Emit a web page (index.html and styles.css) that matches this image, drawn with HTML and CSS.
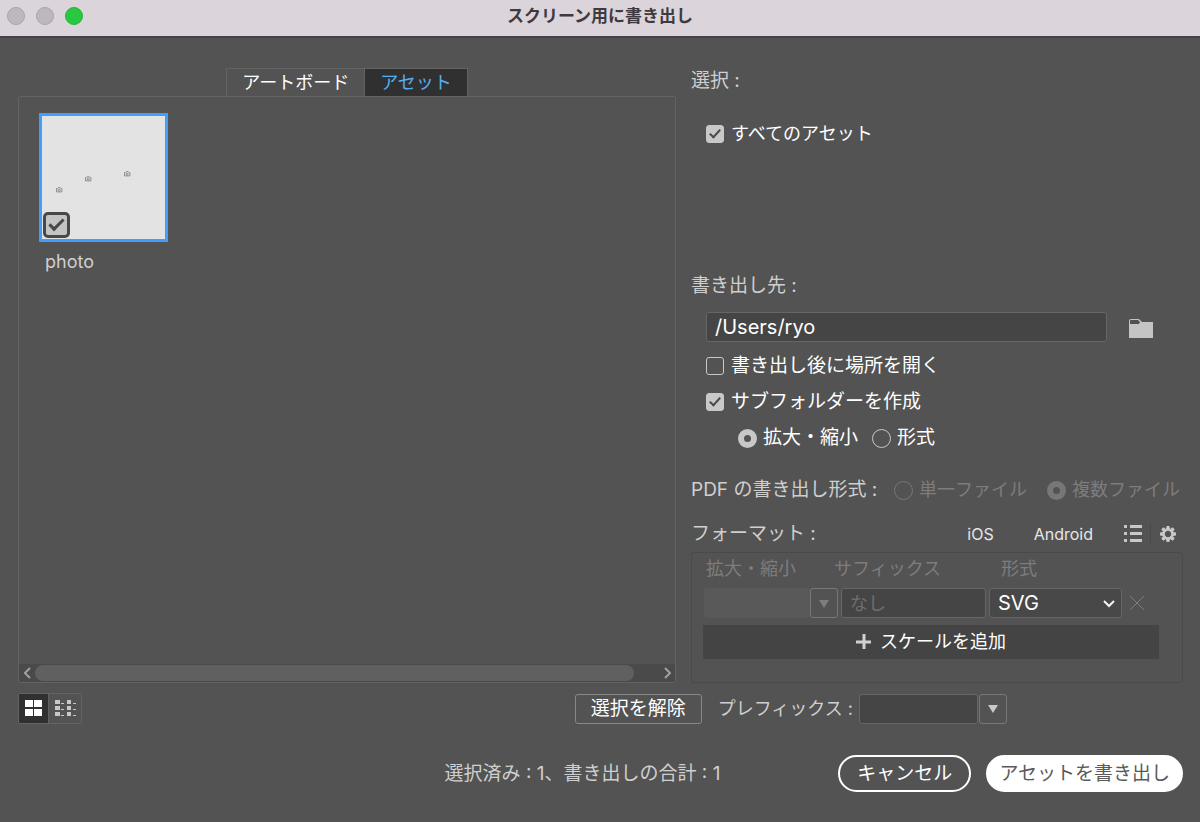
FILE: index.html
```html
<!DOCTYPE html>
<html lang="ja">
<head>
<meta charset="utf-8">
<meta name="viewport" content="width=device-width, initial-scale=1">
<title>スクリーン用に書き出し</title>
<link rel="stylesheet" href="styles.css">
</head>
<body>
<div class="window">
  <header class="titlebar">
    <div class="lights">
      <button class="light" type="button" aria-label="閉じる"></button>
      <button class="light" type="button" aria-label="しまう"></button>
      <button class="light light-zoom" type="button" aria-label="拡大"></button>
    </div>
    <h1 class="title">スクリーン用に書き出し</h1>
  </header>

  <main class="content">
    <section class="assets">
      <div class="tabs" role="tablist">
        <button class="tab" type="button" role="tab" aria-selected="false">アートボード</button>
        <button class="tab tab-active" type="button" role="tab" aria-selected="true">アセット</button>
      </div>
      <div class="panel">
        <div class="asset-list">
          <div class="asset">
            <div class="thumb">
              <svg class="thumb-art" viewBox="0 0 123 123" aria-hidden="true">
                <g fill="none" stroke="#8e8e8e" stroke-width="1">
                  <g id="cam"><path d="M14.5 72.5h1l.6-.8h2.2l.6.8h1v3.4h-5.4z"/><circle cx="17.2" cy="74.2" r="1"/></g>
                  <use href="#cam" x="29" y="-11"/>
                  <use href="#cam" x="68" y="-16"/>
                </g>
              </svg>
              <input class="thumb-check" id="asset-photo" type="checkbox" checked>
            </div>
            <label class="asset-name" for="asset-photo">photo</label>
          </div>
        </div>
        <div class="scrollbar">
          <button class="scroll-arrow" type="button" aria-label="左へ"><svg width="7" height="12" viewBox="0 0 7 12"><path d="M6 1 1 6l5 5"/></svg></button>
          <div class="track"><div class="scroll-thumb"></div></div>
          <button class="scroll-arrow" type="button" aria-label="右へ"><svg width="7" height="12" viewBox="0 0 7 12"><path d="m1 1 5 5-5 5"/></svg></button>
        </div>
      </div>
    </section>

    <section class="settings">
      <div class="group group-select">
        <h2 class="heading">選択 :</h2>
        <label class="option option-all"><input class="check" type="checkbox" checked>すべてのアセット</label>
      </div>

      <div class="group group-dest">
        <label class="heading" for="path">書き出し先 :</label>
        <div class="path-row">
          <input class="field path" id="path" type="text" value="/Users/ryo">
          <button class="icon-button folder" type="button" aria-label="フォルダーを選択">
            <svg width="24" height="20" viewBox="0 0 24 20"><path d="M0 19V2Q0 0 2 0h7q1 0 2 1l2 2h11v16z" fill="#c4c4c4"/><path d="M1 2q0-1 1-1h7l2 2-1 2H1z" fill="#505050"/></svg>
          </button>
        </div>
        <label class="option"><input class="check" type="checkbox">書き出し後に場所を開く</label>
        <label class="option"><input class="check" type="checkbox" checked>サブフォルダーを作成</label>
        <div class="radio-row">
          <label class="option"><input class="radio" type="radio" name="sub" checked>拡大・縮小</label>
          <label class="option"><input class="radio" type="radio" name="sub">形式</label>
        </div>
      </div>

      <div class="pdf-row">
        <span class="heading">PDF の書き出し形式 :</span>
        <div class="pdf-options">
          <label class="option option-off"><input class="radio" type="radio" name="pdf" disabled>単一ファイル</label>
          <label class="option option-off"><input class="radio" type="radio" name="pdf" checked disabled>複数ファイル</label>
        </div>
      </div>

      <div class="format-head">
        <h2 class="heading">フォーマット :</h2>
        <div class="presets">
          <button class="preset" type="button">iOS</button>
          <button class="preset" type="button">Android</button>
        </div>
        <button class="icon-button" type="button" aria-label="一覧">
          <svg width="18" height="18" viewBox="0 0 18 18" fill="#c8c8c8"><path d="M0 0h3v3H0zM0 7h3v3H0zM0 14h3v3H0zM6 0h12v3H6zM6 7h12v3H6zM6 14h12v3H6z"/></svg>
        </button>
        <button class="icon-button gear" type="button" aria-label="詳細設定">
          <svg width="16" height="16" viewBox="-8 -8 16 16"><g fill="#c8c8c8"><path id="tooth" d="M-2-5-1.4-8H1.4L2-5z"/><use href="#tooth" transform="rotate(45)"/><use href="#tooth" transform="rotate(90)"/><use href="#tooth" transform="rotate(135)"/><use href="#tooth" transform="rotate(180)"/><use href="#tooth" transform="rotate(225)"/><use href="#tooth" transform="rotate(270)"/><use href="#tooth" transform="rotate(315)"/></g><circle r="4.4" fill="none" stroke="#c8c8c8" stroke-width="2.4"/></svg>
        </button>
      </div>

      <div class="format-box">
        <div class="format-labels">
          <label for="scale">拡大・縮小</label>
          <label for="suffix">サフィックス</label>
          <label for="type">形式</label>
        </div>
        <div class="format-row">
          <div class="combo combo-off">
            <input class="field" id="scale" type="text" disabled>
            <button class="drop" type="button" disabled aria-label="拡大・縮小を選択"><svg width="12" height="9" viewBox="0 0 12 9"><path d="M1 1h10L6 9z"/></svg></button>
          </div>
          <input class="field suffix" id="suffix" type="text" placeholder="なし" disabled>
          <div class="select-wrap">
            <select class="select" id="type"><option>SVG</option><option>PNG</option><option>JPG</option><option>PDF</option></select>
            <svg class="chevron" width="12" height="8" viewBox="0 0 12 8"><path d="m1 1 5 5 5-5"/></svg>
          </div>
          <button class="remove" type="button" disabled aria-label="削除"><svg width="14" height="14" viewBox="0 0 14 14"><path d="m0 0 14 14M14 0 0 14"/></svg></button>
        </div>
        <button class="add" type="button"><svg width="16" height="16" viewBox="0 0 16 16"><path d="M8 0v15M0 8h15"/></svg>スケールを追加</button>
      </div>
    </section>
  </main>

  <div class="toolbar">
    <div class="views">
      <button class="view view-active" type="button" aria-label="サムネール表示"><svg width="17" height="17" viewBox="0 0 17 17" fill="#fff"><path d="M0 0h8v7H0zM9 0h8v7H9zM0 9h8v7H0zM9 9h8v7H9z"/></svg></button>
      <button class="view" type="button" aria-label="リスト表示"><svg width="21" height="17" viewBox="0 0 21 17" fill="#c8c8c8"><path d="M0 0h5v4H0zM0 6h5v4H0zM0 12h5v4H0zM12 0h4v4h-4zM12 6h4v4h-4zM12 12h4v4h-4zM6 3h3v1H6zM6 9h3v1H6zM6 15h3v1H6zM18 3h3v1h-3zM18 9h3v1h-3zM18 15h3v1h-3z"/></svg></button>
    </div>
    <button class="clear" type="button">選択を解除</button>
    <div class="prefix">
      <label for="prefix">プレフィックス :</label>
      <div class="combo">
        <input class="field" id="prefix" type="text">
        <button class="drop" type="button" aria-label="プレフィックスを選択"><svg width="12" height="9" viewBox="0 0 12 9"><path d="M1 1h10L6 9z"/></svg></button>
      </div>
    </div>
  </div>

  <footer class="footer">
    <p class="summary">選択済み : 1、書き出しの合計 : 1</p>
    <div class="actions">
      <button class="pill" type="button">キャンセル</button>
      <button class="pill pill-primary" type="button">アセットを書き出し</button>
    </div>
  </footer>
</div>
</body>
</html>
```

FILE: styles.css
```css
*, *::before, *::after { box-sizing: border-box; }

body {
  margin: 0;
  background: #535353;
  color: #cfcfcf;
  font-family: Inter, "Noto Sans CJK JP", sans-serif;
  font-size: 19px;
  line-height: 26px;
}

button, input, select { margin: 0; font: inherit; color: inherit; }
button { padding: 0; border: 0; background: none; white-space: nowrap; }
svg { display: block; }
h1, h2, p { margin: 0; font-size: inherit; font-weight: 400; }

.window {
  display: flex;
  flex-direction: column;
  min-height: 100vh;
}

/* Title bar */
.titlebar {
  display: grid;
  grid-template-columns: 1fr auto 1fr;
  align-items: center;
  height: 38px;
  padding: 0 7px 5px;
  background: #dcd4db;
  border-bottom: 2px solid #444146;
}
.lights { display: flex; gap: 11px; }
.light {
  width: 18px;
  height: 18px;
  border: 1px solid #a9a3aa;
  border-radius: 50%;
  background: #bdb7be;
}
.light-zoom { border-color: #22b436; background: #28c840; }
.title { color: #3e3a3f; font-size: 17px; font-weight: 700; }

/* Two columns */
.content {
  display: grid;
  grid-template-columns: 658fr 492fr;
  gap: 15px;
  flex: 1;
  padding: 30px 17px 0 18px;
}
.assets, .settings { display: flex; flex-direction: column; min-width: 0; }

.tabs { display: flex; justify-content: center; }
.tab {
  height: 28px;
  padding: 0 15px;
  border: 1px solid #636363;
  border-bottom: 0;
  color: #fff;
  font-size: 18px;
  line-height: 28px;
}
.tab-active { border-left: 0; background: #303030; color: #55aef5; }

.panel {
  display: flex;
  flex: 1;
  flex-direction: column;
  border: 1px solid #636363;
  border-radius: 2px;
}
.asset-list { flex: 1; padding: 16px 20px; }
.asset { width: 129px; }
.thumb { position: relative; border: 3px solid #419efa; background: #e3e3e3; }
.thumb-art { width: 100%; }
.thumb-check {
  position: absolute;
  bottom: 1px;
  left: 1px;
  display: grid;
  place-items: center;
  width: 27px;
  height: 26px;
  border: 3px solid #484848;
  border-radius: 5px;
  background: #c4c4c4;
  appearance: none;
}
.thumb-check:checked::after {
  width: 15px;
  height: 8px;
  margin-bottom: 4px;
  border: solid #484848;
  border-width: 0 0 3px 3px;
  transform: rotate(-45deg);
  content: "";
}
.asset-name { display: block; padding: 7px 6px; font-size: 18px; }

.scrollbar { display: flex; height: 18px; background: #4a4a4a; }
.scroll-arrow { display: grid; place-items: center; width: 16px; }
.scroll-arrow svg { fill: none; stroke: #a0a0a0; stroke-width: 2; }
.track { flex: 1; padding-top: 1px; }
.scroll-thumb { width: 96%; height: 16px; border-radius: 8px; background: #606060; }

/* Settings */
.heading { display: block; white-space: nowrap; }
.group-select { flex: 1; }
.option {
  display: flex;
  align-items: center;
  gap: 7px;
  color: #fff;
  white-space: nowrap;
}
.option-all { margin: 27px 0 0 15px; font-size: 18px; }
.option-off { color: #7d7d7d; font-size: 18px; }

.check {
  display: grid;
  flex: none;
  place-items: center;
  width: 18px;
  height: 18px;
  border: 1px solid #c8c8c8;
  border-radius: 3px;
  appearance: none;
}
.check:checked { background: #c8c8c8; }
.check:checked::after {
  width: 6px;
  height: 11px;
  margin-bottom: 3px;
  border: solid #4a4a4a;
  border-width: 0 2px 2px 0;
  transform: rotate(42deg);
  content: "";
}
.radio {
  flex: none;
  width: 19px;
  height: 19px;
  border: 1px solid #c8c8c8;
  border-radius: 50%;
  appearance: none;
}
.radio:checked { border: 6px solid #c8c8c8; }
.radio:disabled { border-color: #777; }

.field {
  min-width: 0;
  height: 30px;
  padding: 0 8px;
  border: 1px solid #666;
  border-radius: 3px;
  background: #454545;
  color: #fff;
}
.group-dest { display: grid; gap: 10px; }
.group-dest > .option { margin-left: 15px; }
.path-row {
  display: flex;
  gap: 22px;
  margin: 3px 30px 1px 15px;
}
.path { flex: 1; font-size: 20px; }
.icon-button { display: grid; place-items: center; }
.folder { padding-top: 4px; }
.radio-row { display: flex; gap: 14px; margin-left: 47px; }
.radio-row .option { gap: 6px; }

.pdf-row {
  display: flex;
  align-items: center;
  justify-content: space-between;
  margin-top: 26px;
}
.pdf-options { display: flex; gap: 20px; padding-right: 3px; }
.pdf-options .option { gap: 6px; }

.format-head { display: flex; align-items: center; margin-top: 18px; padding-right: 7px; }
.presets { display: flex; flex: 1; justify-content: flex-end; gap: 40px; margin-right: 31px; }
.preset { color: #e6e6e6; font-size: 16px; }
.gear { margin-left: 8px; padding-left: 9px; border-left: 1px solid #494949; height: 22px; }

.format-box {
  margin-top: 5px;
  padding: 3px 23px 23px 11px;
  border: 1px solid #4a4a4a;
  border-radius: 3px;
}
.format-labels {
  display: grid;
  grid-template-columns: 128px 167px 1fr;
  padding-left: 3px;
  color: #7d7d7d;
  font-size: 18px;
}
.format-row { display: flex; gap: 3px; margin: 6px 0 7px; padding-left: 1px; }
.combo { display: flex; gap: 1px; width: 148px; }
.combo .field { flex: 1; }
.drop {
  display: grid;
  place-items: center;
  width: 28px;
  height: 30px;
  border: 1px solid #777;
  border-radius: 3px;
  fill: #c8c8c8;
}
.combo-off { gap: 0; width: 134px; }
.combo-off .field { border-color: #595959; background: #595959; }
.combo-off .drop { fill: #7d7d7d; }
.suffix { flex: 1; font-size: 18px; }
.suffix::placeholder { color: #6f6f6f; opacity: 1; }
.select-wrap { position: relative; width: 133px; }
.select {
  width: 100%;
  height: 30px;
  padding: 0 8px;
  border: 1px solid #666;
  border-radius: 3px;
  background: #484848;
  color: #fff;
  font-size: 20px;
  appearance: none;
}
.chevron {
  position: absolute;
  top: 12px;
  right: 7px;
  fill: none;
  stroke: #f4f4f4;
  stroke-width: 2;
  pointer-events: none;
}
.remove { display: grid; place-items: center; width: 24px; margin-right: 10px; }
.remove svg { stroke: #7d7d7d; }
.add {
  display: flex;
  align-items: center;
  justify-content: center;
  gap: 8px;
  width: 100%;
  height: 34px;
  background: #444;
  color: #fff;
  font-size: 18px;
}
.add svg { stroke: #d0d0d0; stroke-width: 3; }

/* Bottom rows */
.toolbar { display: flex; align-items: center; margin-top: 10px; padding: 0 193px 0 18px; }
.views { display: flex; margin-right: auto; border: 1px solid #636363; border-radius: 2px; }
.view { display: grid; place-items: center; width: 32px; height: 29px; }
.view-active { width: 30px; padding-right: 1px; border-right: 1px solid #636363; background: #303030; }
.clear {
  height: 30px;
  padding: 0 15px;
  border: 1px solid #888;
  border-radius: 3px;
  color: #fff;
}
.prefix { display: flex; align-items: center; gap: 6px; margin-left: 16px; font-size: 18px; white-space: nowrap; }

.footer {
  display: flex;
  align-items: center;
  justify-content: flex-end;
  gap: 118px;
  margin-top: 31px;
  padding: 0 17px 30px;
}
.summary { white-space: nowrap; }
.actions { display: flex; gap: 15px; }
.pill {
  height: 37px;
  padding: 0 17px;
  border: 2px solid #fff;
  border-radius: 19px;
  color: #fff;
}
.pill-primary { padding: 0 11px; background: #fff; color: #5a5a5a; }
```
